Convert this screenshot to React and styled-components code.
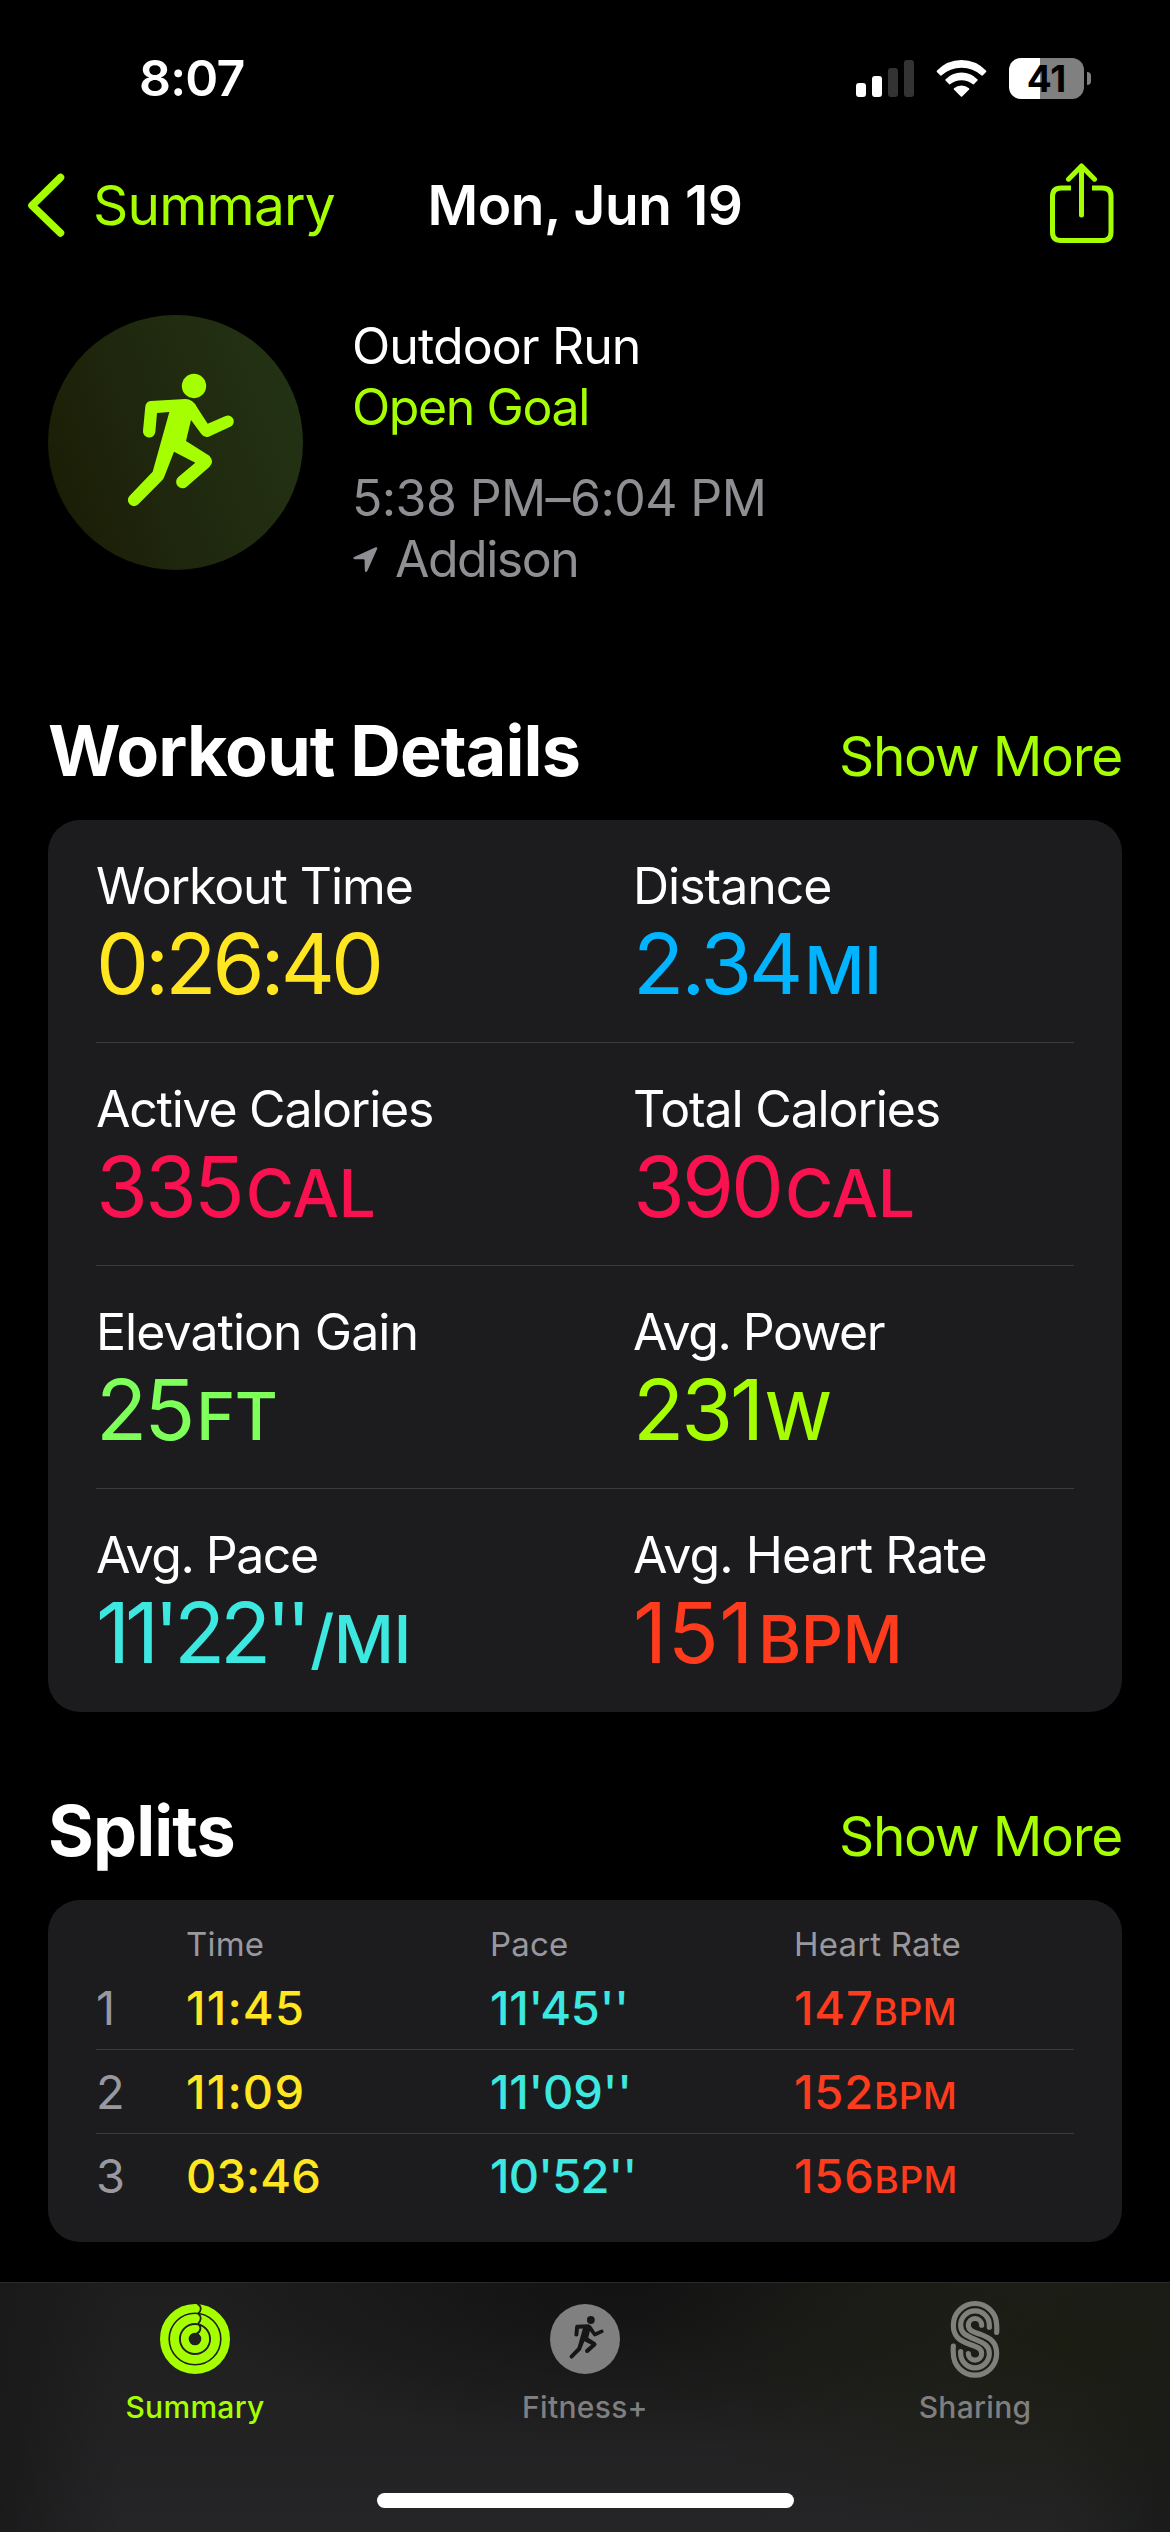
import styled, { createGlobalStyle } from "styled-components";

const metrics = [
    [
        { label: "Workout Time", value: "0:26:40", color: "#ffe620", labelSpacing: -1.1, spacing: -4 },
        { label: "Distance", value: "2.34", unit: "MI", color: "#00b4ff", labelSpacing: -1 },
    ],
    [
        { label: "Active Calories", value: "335", unit: "CAL", color: "#fa114f", labelSpacing: -1.25 },
        { label: "Total Calories", value: "390", unit: "CAL", color: "#fa114f", labelSpacing: -1.15 },
    ],
    [
        { label: "Elevation Gain", value: "25", unit: "FT", color: "#7fff5a", labelSpacing: -0.95 },
        { label: "Avg. Power", value: "231", unit: "W", color: "#a6ff00", labelSpacing: -1.5 },
    ],
    [
        { label: "Avg. Pace", value: "11'22''", unit: "/MI", color: "#3ce8e0", labelSpacing: -1.5, spacing: -5.2 },
        { label: "Avg. Heart Rate", value: "151", unit: "BPM", color: "#ff3b1d", labelSpacing: -0.9, spacing: 0.5 },
    ],
];

const splits = [
    { time: "11:45", pace: "11'45''", rate: 147, timeSpacing: 1.2, paceSpacing: -0.2 },
    { time: "11:09", pace: "11'09''", rate: 152, timeSpacing: 1.2, paceSpacing: -0.2 },
    { time: "03:46", pace: "10'52''", rate: 156, timeSpacing: 0.1, paceSpacing: -0.8 },
];

const runnerPath =
    "M226 177 L122 183 Q108 185 106 199 L99 272 A18.5 18.5 0 0 0 136 276 L141 219 L178 216 L128 395 L59 467 A18 18 0 0 0 85 493 L158 419 Q162 413 164 407 L192 335 L256 368 L205 411 A19 19 0 0 0 230 440 L298 381 Q314 365 298 347 L228 303 L243 240 L274 282 Q282 294 296 290 L361 260 A17 17 0 0 0 347 228 L293 251 L262 203 Q249 177 226 177Z";

const Runner = () => (
    <>
        <circle cx="252" cy="138" r="36.5" />
        <path d={runnerPath} />
    </>
);

const SignalIcon = () => (
    <svg width="58" height="37" viewBox="0 0 58 37" fill="#fff">
        <rect x="0" y="23" width="10" height="14" rx="3" />
        <rect x="16" y="16" width="10" height="21" rx="3" />
        <rect x="32" y="8" width="10" height="29" rx="3" fill="#333" />
        <rect x="48" y="0" width="10" height="37" rx="3" fill="#333" />
    </svg>
);

const WifiIcon = () => (
    <svg width="51" height="37" viewBox="0 0 51 37" fill="#fff">
        <path d="M0.8 10.8 Q11 0 25.5 0 Q40 0 50.2 10.8 Q50.6 11.4 50.1 12 L46.6 15.4 Q46 15.9 45.3 15.3 Q37 7.7 25.5 7.7 Q14 7.7 5.7 15.3 Q5 15.9 4.4 15.4 L0.9 12 Q0.4 11.4 0.8 10.8Z" />
        <path d="M9.4 19.5 Q16.2 12.6 25.5 12.6 Q34.8 12.6 41.6 19.5 Q42 20.1 41.5 20.6 L37.8 24.2 Q37.2 24.7 36.6 24.1 Q31.9 20.2 25.5 20.2 Q19.1 20.2 14.4 24.1 Q13.8 24.7 13.2 24.2 L9.5 20.6 Q9 20.1 9.4 19.5Z" />
        <path d="M18 28.2 Q21.3 25.6 25.5 25.6 Q29.7 25.6 33 28.2 Q33.6 28.8 33.1 29.4 L26.1 36.4 Q25.5 37 24.9 36.4 L17.9 29.4 Q17.4 28.8 18 28.2Z" />
    </svg>
);

const BackIcon = () => (
    <svg width="40" height="66" viewBox="0 0 40 66" fill="none" stroke="#a6ff00" strokeWidth="7.5" strokeLinecap="round" strokeLinejoin="round">
        <path d="M33.5 5.5 L5 33.5 L33.5 61" />
    </svg>
);

const ShareIcon = () => (
    <svg width="64" height="84" viewBox="0 0 64 84" fill="none" stroke="#a6ff00" strokeWidth="5" strokeLinecap="round" strokeLinejoin="round">
        <path d="M31.5 52 V3 M18.5 16.2 L31.5 3 L44.5 16.2" />
        <path strokeLinecap="butt" d="M21 25 H11 Q2.5 25 2.5 33.5 V69 Q2.5 77.5 11 77.5 H52.5 Q61 77.5 61 69 V33.5 Q61 25 52.5 25 H42" />
    </svg>
);

const LocationIcon = () => (
    <svg width="25" height="26" viewBox="0 0 25 26" fill="#8e8e93">
        <path d="M22.6 0.3 L1.2 9.9 Q-0.8 11.3 1.6 12.3 H10.6 Q11.6 12.3 11.6 13.3 L11.8 23.2 Q12.6 26.6 14.3 24 L24.2 1.8 Q24.6 -0.4 22.6 0.3Z" />
    </svg>
);

const RingsIcon = () => (
    <svg width="70" height="70" viewBox="0 0 70 70" fill="none" stroke="#a6ff00">
        <circle cx="35" cy="35" r="30.8" strokeWidth="8.4" />
        <circle cx="35" cy="35" r="20.5" strokeWidth="9" />
        <circle cx="35" cy="35" r="10.2" strokeWidth="7.8" />
        <path stroke="#202020" strokeWidth="1.8" d="M37.5 0 Q41 1.8 40.8 4.8 Q40.6 8 38 9.6 M38 9.6 Q41 11.6 40.7 14.6 Q40.4 17.4 38 19.6 M38 19.6 Q40.4 21.6 40.4 24.6 Q40 28.4 36.5 29.6" />
    </svg>
);

const FitnessIcon = () => (
    <svg width="70" height="70" viewBox="0 0 70 70">
        <circle cx="35" cy="35" r="35" fill="#808080" />
        <g fill="#161616" transform="translate(13.8 1.2) scale(0.1073)">
            <Runner />
        </g>
    </svg>
);

const SharingIcon = () => (
    <svg width="50" height="79" viewBox="88 30 150 236" fill="none" stroke="#7f807b" strokeWidth="15.5" strokeLinecap="round">
        <path d="M228 127 Q229 115 228 105 A65 65 0 0 0 98 105 C98 140 118 152 148 163 C168 170 183 174 183 190 A20 20 0 0 1 143 190" />
        <path d="M206 111 V105 A43 43 0 0 0 120 105 C120 128 135 136 163 147.5 C191 159 206 167 206 190 A43 43 0 0 1 120 190 V184" />
        <path d="M183 105 A20 20 0 0 0 143 105 C143 121 158 125 178 132 C208 143 228 155 228 190 A65 65 0 0 1 98 190 Q97 180 98 168" />
    </svg>
);

const SectionHeader = ({ title, top }) => (
    <HeaderRow $top={top}>
        <SectionTitle>{title}</SectionTitle>
        <ShowMore>Show More</ShowMore>
    </HeaderRow>
);

const App = () => {
    return (
        <Screen>
            <GlobalStyle />
            <StatusBar>
                <Clock>8:07</Clock>
                <StatusIcons>
                    <SignalIcon />
                    <WifiIcon />
                    <Battery>
                        <BatteryBody>41</BatteryBody>
                        <BatteryTip />
                    </Battery>
                </StatusIcons>
            </StatusBar>

            <NavBar>
                <BackButton>
                    <BackIcon />
                    Summary
                </BackButton>
                <NavTitle>Mon, Jun 19</NavTitle>
                <ShareButton>
                    <ShareIcon />
                </ShareButton>
            </NavBar>

            <Hero>
                <Badge>
                    <svg width="150" height="190" viewBox="0 0 450 570" fill="#a6ff00">
                        <Runner />
                    </svg>
                </Badge>
                <HeroText>
                    <HeroLine $spacing={-0.9}>Outdoor Run</HeroLine>
                    <HeroLine $color="#a6ff00" $spacing={-1.4}>Open Goal</HeroLine>
                    <HeroLine $color="#8e8e93" $spacing={-0.6} $top={30}>5:38 PM–6:04 PM</HeroLine>
                    <HeroLine $color="#8e8e93" $spacing={-1.5}>
                        <LocationIcon />
                        Addison
                    </HeroLine>
                </HeroText>
            </Hero>

            <SectionHeader title="Workout Details" top={116} />
            <Card>
                {metrics.map((row, i) => (
                    <MetricRow key={i}>
                        {row.map((e) => (
                            <Metric key={e.label}>
                                <MetricLabel $spacing={e.labelSpacing}>{e.label}</MetricLabel>
                                <MetricValue $color={e.color} $spacing={e.spacing}>
                                    {e.value}
                                    {e.unit && <Unit>{e.unit}</Unit>}
                                </MetricValue>
                            </Metric>
                        ))}
                    </MetricRow>
                ))}
            </Card>

            <SectionHeader title="Splits" top={74} />
            <SplitsCard>
                <SplitsHead>
                    <span />
                    <span>Time</span>
                    <span>Pace</span>
                    <span>Heart Rate</span>
                </SplitsHead>
                {splits.map((e, i) => (
                    <SplitRow key={e.time}>
                        <SplitIndex>{i + 1}</SplitIndex>
                        <SplitValue $color="#ffe620" $spacing={e.timeSpacing}>{e.time}</SplitValue>
                        <SplitValue $color="#3ce8e0" $spacing={e.paceSpacing}>{e.pace}</SplitValue>
                        <SplitValue $color="#ff3b1d" $spacing={0.8}>
                            {e.rate}
                            <SplitUnit>BPM</SplitUnit>
                        </SplitValue>
                    </SplitRow>
                ))}
            </SplitsCard>

            <TabBar>
                <Tabs>
                    <Tab $active>
                        <TabIcon><RingsIcon /></TabIcon>
                        Summary
                    </Tab>
                    <Tab>
                        <TabIcon><FitnessIcon /></TabIcon>
                        Fitness+
                    </Tab>
                    <Tab>
                        <TabIcon><SharingIcon /></TabIcon>
                        Sharing
                    </Tab>
                </Tabs>
                <HomeIndicator />
            </TabBar>
        </Screen>
    );
};

export default App;

const GlobalStyle = createGlobalStyle`
    * {
        box-sizing: border-box;
    }

    body {
        margin: 0;
        background: #000;
    }

    svg {
        display: block;
        flex: none;
    }
`;

const Screen = styled.div`
    width: 1170px;
    height: 2532px;
    display: flex;
    flex-direction: column;
    overflow: hidden;
    background: #000;
    color: #fff;
    font-family: Inter, "Liberation Sans", sans-serif;
    white-space: nowrap;
`;

const StatusBar = styled.div`
    height: 156px;
    padding: 0 79px 0 139px;
    display: flex;
    align-items: center;
    justify-content: space-between;
`;

const Clock = styled.div`
    font-size: 50px;
    font-weight: 600;
    letter-spacing: -0.8px;
`;

const StatusIcons = styled.div`
    display: flex;
    align-items: center;
    gap: 22px;
`;

const Battery = styled.div`
    display: flex;
    align-items: center;
    gap: 3px;
`;

const BatteryBody = styled.div`
    width: 75px;
    height: 41px;
    border-radius: 12px;
    background: linear-gradient(90deg, #fff 31px, #808080 31px);
    color: #000;
    font-size: 37px;
    font-weight: 700;
    line-height: 41px;
    text-align: center;
`;

const BatteryTip = styled.div`
    width: 4px;
    height: 13px;
    border-radius: 0 4px 4px 0;
    background: #808080;
`;

const NavBar = styled.div`
    height: 98px;
    padding: 0 27px;
    display: grid;
    grid-template-columns: 1fr auto 1fr;
    align-items: center;
    font-size: 55px;
`;

const BackButton = styled.div`
    display: flex;
    align-items: center;
    gap: 26px;
    color: #a6ff00;
    letter-spacing: -0.8px;
`;

const NavTitle = styled.div`
    font-weight: 600;
    letter-spacing: -0.4px;
`;

const ShareButton = styled.div`
    justify-self: end;
    margin-right: 29px;
`;

const Hero = styled.div`
    height: 275px;
    margin-top: 61px;
    padding: 0 48px;
    display: flex;
    gap: 49px;
`;

const Badge = styled.div`
    width: 255px;
    height: 255px;
    padding: 25px 0 0 62px;
    border-radius: 50%;
    background: linear-gradient(70deg, #1a1b03, #1f280e 45%, #243415);
`;

const HeroText = styled.div`
    padding-top: 1px;
    display: flex;
    flex-direction: column;
`;

const HeroLine = styled.div`
    display: flex;
    align-items: center;
    gap: 17px;
    margin-top: ${(props) => props.$top || 0}px;
    color: ${(props) => props.$color || "#fff"};
    font-size: 50px;
    line-height: 61px;
    letter-spacing: ${(props) => props.$spacing}px;

    svg {
        margin-left: 1px;
    }
`;

const HeaderRow = styled.div`
    height: 90px;
    margin: ${(props) => props.$top}px 48px 24px;
    display: flex;
    align-items: baseline;
    justify-content: space-between;
`;

const SectionTitle = styled.h2`
    margin: 0;
    font-size: 70px;
    font-weight: 700;
    line-height: 90px;
    letter-spacing: -0.9px;
`;

const ShowMore = styled.div`
    color: #a6ff00;
    font-size: 55px;
    line-height: 66px;
    letter-spacing: -1.3px;
`;

const Card = styled.div`
    margin: 0 48px;
    padding: 0 48px;
    border-radius: 32px;
    background: #1c1c1e;
`;

const MetricRow = styled.div`
    height: 223px;
    padding-top: 36px;
    display: grid;
    grid-template-columns: 537px 1fr;

    &:not(:last-child) {
        border-bottom: 1px solid #3b3b3d;
    }
`;

const Metric = styled.div`
    display: flex;
    flex-direction: column;
`;

const MetricLabel = styled.div`
    font-size: 50px;
    line-height: 60px;
    letter-spacing: ${(props) => props.$spacing}px;
`;

const MetricValue = styled.div`
    color: ${(props) => props.$color};
    font-size: 84px;
    line-height: 96px;
    letter-spacing: ${(props) => props.$spacing ?? -3}px;
`;

const Unit = styled.span`
    margin-left: 4px;
    font-size: 66px;
    font-weight: 500;
    line-height: 1;
    letter-spacing: -0.5px;
`;

const SplitsCard = styled(Card)`
    height: 342px;
    padding-top: 22px;
`;

const SplitRow = styled.div`
    height: 84px;
    display: grid;
    grid-template-columns: 90px 304px 304px 1fr;
    align-items: center;
    border-bottom: 1px solid #3b3b3d;
    font-size: 47px;

    &:last-child {
        border-color: transparent;
    }
`;

const SplitsHead = styled(SplitRow)`
    height: 44px;
    border: 0;
    color: #98989e;
    font-size: 33px;
    letter-spacing: 0.2px;
`;

const SplitIndex = styled.div`
    color: #98989e;
`;

const SplitValue = styled.div`
    color: ${(props) => props.$color};
    font-weight: 500;
    letter-spacing: ${(props) => props.$spacing}px;
`;

const SplitUnit = styled.span`
    font-size: 37px;
    letter-spacing: 0.5px;
`;

const TabBar = styled.div`
    height: 250px;
    margin-top: 40px;
    display: flex;
    flex-direction: column;
    align-items: center;
    border-top: 1px solid #2b2b2b;
    background:
        radial-gradient(420px 200px at 1060px 60px, rgba(27, 29, 18, 0.9), rgba(27, 29, 18, 0)),
        radial-gradient(420px 170px at 620px 0, rgba(18, 18, 18, 1), rgba(18, 18, 18, 0)),
        linear-gradient(90deg, rgba(24, 24, 25, 0.8), rgba(24, 24, 25, 0) 120px, rgba(24, 24, 25, 0) 1050px, rgba(24, 24, 25, 0.8)),
        linear-gradient(#1e1e1e, #252527);
`;

const Tabs = styled.div`
    width: 100%;
    height: 210px;
    display: flex;
`;

const Tab = styled.div`
    flex: 1;
    display: flex;
    flex-direction: column;
    align-items: center;
    color: ${(props) => (props.$active ? "#a6ff00" : "#7f7f7f")};
    font-size: 30px;
    font-weight: 500;
    line-height: 36px;
    letter-spacing: 0.3px;
`;

const TabIcon = styled.div`
    height: 78px;
    margin: 17px 0 11px;
    display: flex;
    align-items: center;
`;

const HomeIndicator = styled.div`
    width: 417px;
    height: 15px;
    border-radius: 8px;
    background: #fff;
`;
